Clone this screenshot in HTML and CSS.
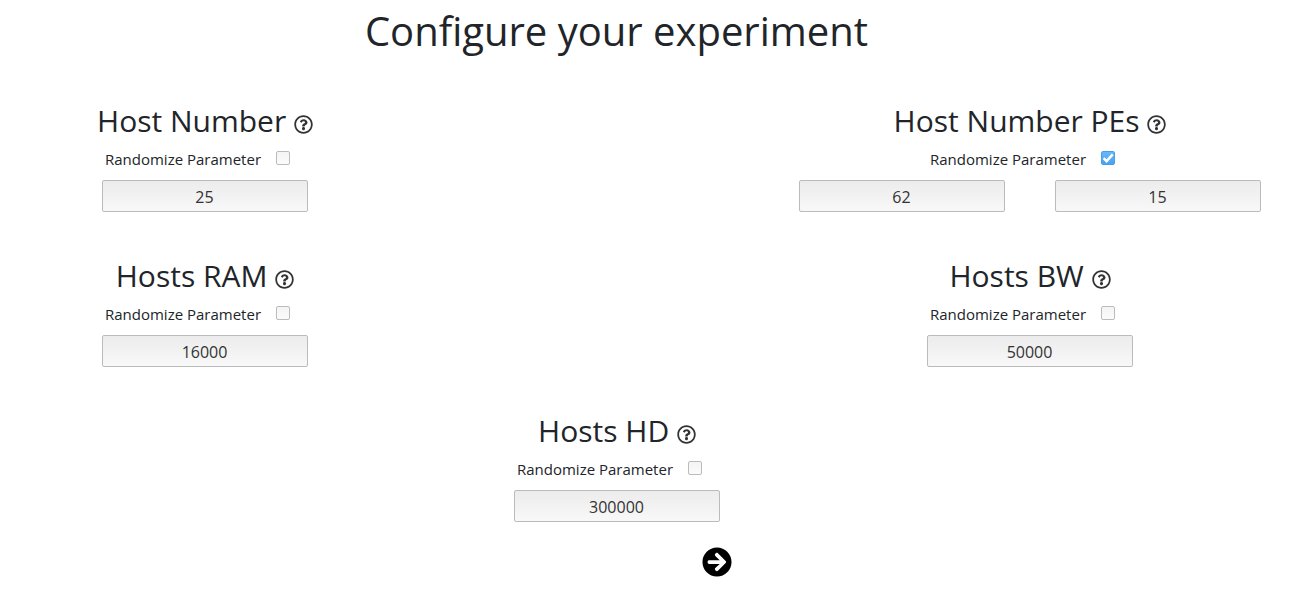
FILE: index.html
```html
<!DOCTYPE html>
<html lang="en">
<head>
<meta charset="utf-8">
<title>Configure your experiment</title>
<link rel="stylesheet" href="styles.css">
</head>
<body>
<svg class="defs" aria-hidden="true">
  <symbol id="help" viewBox="0 0 512 512"><path fill="currentColor" d="M256 8C119.043 8 8 119.083 8 256c0 136.997 111.043 248 248 248s248-111.003 248-248C504 119.083 392.957 8 256 8zm0 448c-110.532 0-200-89.431-200-200 0-110.495 89.472-200 200-200 110.491 0 200 89.471 200 200 0 110.53-89.431 200-200 200zm107.244-255.2c0 67.052-72.421 68.084-72.421 92.863V300c0 6.627-5.373 12-12 12h-45.647c-6.627 0-12-5.373-12-12v-8.659c0-35.745 27.1-50.034 47.579-61.516 17.561-9.845 28.324-16.541 28.324-29.579 0-17.246-21.999-28.693-39.784-28.693-23.189 0-33.894 10.977-48.942 29.969-4.057 5.12-11.46 6.071-16.666 2.124l-27.824-21.098c-5.107-3.872-6.251-11.066-2.644-16.363C184.846 131.491 214.94 112 261.794 112c49.071 0 101.45 38.304 101.45 88.8zM298 368c0 23.159-18.841 42-42 42s-42-18.841-42-42 18.841-42 42-42 42 18.841 42 42z"/></symbol>
</svg>
<main class="page">
  <h1 class="title">Configure your experiment</h1>
  <div class="row">
    <section class="param">
      <h2 class="name">Host Number <svg class="help"><use href="#help"/></svg></h2>
      <label class="random">Randomize Parameter<span class="check"></span></label>
      <div class="fields"><input class="field" value="25"></div>
    </section>
    <section class="param">
      <h2 class="name">Host Number PEs <svg class="help"><use href="#help"/></svg></h2>
      <label class="random">Randomize Parameter<span class="check checked"><svg class="tick" viewBox="0 0 12 12"><path d="M1.600 6.200L4.600 9.200 10.700 2.300"/></svg></span></label>
      <div class="fields"><input class="field" value="62"><input class="field" value="15"></div>
    </section>
  </div>
  <div class="row">
    <section class="param">
      <h2 class="name">Hosts RAM <svg class="help"><use href="#help"/></svg></h2>
      <label class="random">Randomize Parameter<span class="check"></span></label>
      <div class="fields"><input class="field" value="16000"></div>
    </section>
    <section class="param">
      <h2 class="name">Hosts BW <svg class="help"><use href="#help"/></svg></h2>
      <label class="random">Randomize Parameter<span class="check"></span></label>
      <div class="fields"><input class="field" value="50000"></div>
    </section>
  </div>
  <div class="row single">
    <section class="param">
      <h2 class="name">Hosts HD <svg class="help"><use href="#help"/></svg></h2>
      <label class="random">Randomize Parameter<span class="check"></span></label>
      <div class="fields"><input class="field" value="300000"></div>
    </section>
  </div>
  <button class="next" aria-label="Next"><svg class="next-icon" viewBox="0 0 512 512"><path fill="currentColor" d="M256 8c137 0 248 111 248 248S393 504 256 504 8 393 8 256 119 8 256 8zm-28.900 143.600l75.500 72.400H120c-13.300 0-24 10.700-24 24v16c0 13.300 10.700 24 24 24h182.600l-75.500 72.400c-9.700 9.300-9.900 24.800-.4 34.300l11 10.900c9.400 9.400 24.600 9.400 33.900 0L404.300 273c9.400-9.400 9.400-24.600 0-33.900L271.600 106.300c-9.400-9.400-24.600-9.400-33.900 0l-11 10.900c-9.500 9.600-9.300 25.100.4 34.400z"/></svg></button>
</main>
</body>
</html>
```
FILE: styles.css
```css
* { box-sizing: border-box; }
body {
  margin: 0;
  overflow: hidden;
  background: #fff;
  color: #212529;
  font-family: "Open Sans", "Noto Sans", sans-serif;
}
.defs { display: none; }
.page { width: 1234px; }
.title {
  margin: 0;
  padding: 7px 1px 0 0;
  height: 101px;
  font-size: 40px;
  line-height: 48px;
  font-weight: 400;
  text-align: center;
}
.row {
  display: flex;
  justify-content: space-between;
  height: 155px;
}
.param {
  display: flex;
  flex-direction: column;
  align-items: center;
  width: 410px;
}
.param + .param { width: 462px; margin-right: -27px; }
.single { justify-content: center; }
.name {
  margin: 0;
  height: 40px;
  font-size: 30px;
  line-height: 40px;
  font-weight: 400;
  white-space: nowrap;
}
.help { width: 19px; height: 19px; vertical-align: -2px; color: #333; }
.random {
  display: flex;
  align-items: center;
  gap: 15px;
  height: 24px;
  margin: 6px 0 9px;
  padding-right: 15px;
  font-size: 15px;
}
.check {
  width: 14px;
  height: 14px;
  margin-bottom: 2px;
  border: 1px solid #bbb;
  border-radius: 2px;
  background: linear-gradient(#f4f4f4, #fbfbfb);
}
.checked {
  border-color: #4a9de6;
  background: linear-gradient(#66b8fa, #4ba3ee);
}
.tick {
  display: block;
  width: 12px;
  height: 12px;
  fill: none;
  stroke: #fff;
  stroke-width: 2.5;
}
.fields { display: flex; gap: 50px; }
.field {
  width: 206px;
  height: 32px;
  padding: 2px 9px 0 8px;
  border: 1px solid #bbb;
  border-radius: 2px;
  background: linear-gradient(#ececec, #f8f8f8);
  color: #333;
  font: 16px "Open Sans", "Noto Sans", sans-serif;
  text-align: center;
}
.next {
  display: block;
  margin: -19px 0 0 702px;
  padding: 0;
  width: 30px;
  height: 30px;
  border: 0;
  background: none;
  color: #000;
}
.next-icon { display: block; width: 30px; height: 30px; }
```
